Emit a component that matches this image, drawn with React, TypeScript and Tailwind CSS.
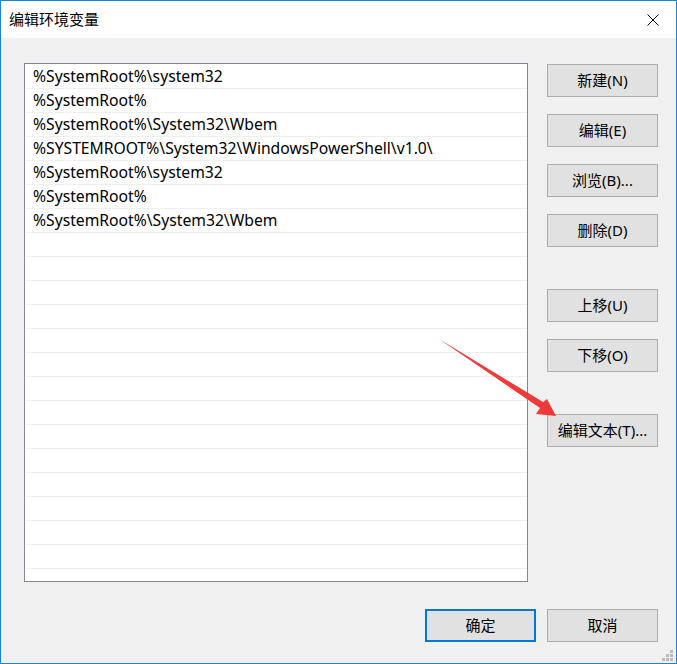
const paths = [
  "%SystemRoot%\\system32",
  "%SystemRoot%",
  "%SystemRoot%\\System32\\Wbem",
  "%SYSTEMROOT%\\System32\\WindowsPowerShell\\v1.0\\",
  "%SystemRoot%\\system32",
  "%SystemRoot%",
  "%SystemRoot%\\System32\\Wbem",
];

const font = { fontFamily: '"Noto Sans", "Noto Sans CJK SC", sans-serif' };

function WinButton({ label, primary = false }: { label: string; primary?: boolean }) {
  return (
    <button
      className={
        primary
          ? "w-[111px] h-[33px] bg-[#e1e1e1] border-2 border-[#0078d7] text-[15px] text-black flex items-center justify-center"
          : "w-[111px] h-[33px] bg-[#e1e1e1] border border-[#adadad] text-[15px] text-black flex items-center justify-center"
      }
    >
      {label}
    </button>
  );
}

export default function App() {
  const rows = Array.from({ length: 22 }, (_, i) => paths[i] ?? "");

  return (
    <div
      className="relative w-[677px] h-[664px] bg-[#f0f0f0] border border-[#1883d7] flex flex-col overflow-hidden"
      style={font}
    >
      {/* title bar */}
      <div className="h-[37px] bg-white flex items-center justify-between pl-[8px] pr-[15px] shrink-0">
        <span className="text-[15px] text-black">编辑环境变量</span>
        <svg width="12" height="12" viewBox="0 0 12 12" className="mr-[2px]">
          <path d="M0.5 0.5 L11.5 11.5 M11.5 0.5 L0.5 11.5" stroke="#000" strokeWidth="1" />
        </svg>
      </div>

      {/* main */}
      <div className="flex pl-[23px] pt-[25px]">
        <div className="w-[504px] h-[519px] bg-white border border-[#828790] pt-px overflow-hidden">
          {rows.map((p, i) => (
            <div
              key={i}
              className="h-[24px] ml-px border-b border-[#efefef] pl-[7px] pt-px flex items-center text-[15.7px] text-black whitespace-nowrap"
            >
              {p}
            </div>
          ))}
        </div>

        <div className="ml-[19px] mt-px flex flex-col">
          <div className="flex flex-col gap-[17px]">
            <WinButton label="新建(N)" />
            <WinButton label="编辑(E)" />
            <WinButton label="浏览(B)..." />
            <WinButton label="删除(D)" />
          </div>
          <div className="mt-[42px] flex flex-col gap-[17px]">
            <WinButton label="上移(U)" />
            <WinButton label="下移(O)" />
          </div>
          <div className="mt-[42px]">
            <WinButton label="编辑文本(T)..." />
          </div>
        </div>
      </div>

      {/* bottom buttons */}
      <div className="flex justify-end gap-[11px] pr-[18px] mt-[27px]">
        <WinButton label="确定" primary />
        <WinButton label="取消" />
      </div>

      {/* red annotation arrow */}
      <svg
        className="absolute left-0 top-0 pointer-events-none"
        width="677"
        height="664"
        viewBox="0 0 677 664"
      >
        <polygon
          points="438,338 542,401 546,398 555,415 535,413 539,407"
          fill="#ef3a3a"
        />
      </svg>

      {/* resize grip */}
      <div className="absolute right-[3px] bottom-[2px] grid grid-cols-3 gap-px">
        <span className="w-[3px] h-[3px]" />
        <span className="w-[3px] h-[3px]" />
        <span className="w-[3px] h-[3px] bg-[#bcbcbc]" />
        <span className="w-[3px] h-[3px]" />
        <span className="w-[3px] h-[3px] bg-[#bcbcbc]" />
        <span className="w-[3px] h-[3px] bg-[#bcbcbc]" />
        <span className="w-[3px] h-[3px] bg-[#bcbcbc]" />
        <span className="w-[3px] h-[3px] bg-[#bcbcbc]" />
        <span className="w-[3px] h-[3px] bg-[#bcbcbc]" />
      </div>
    </div>
  );
}
